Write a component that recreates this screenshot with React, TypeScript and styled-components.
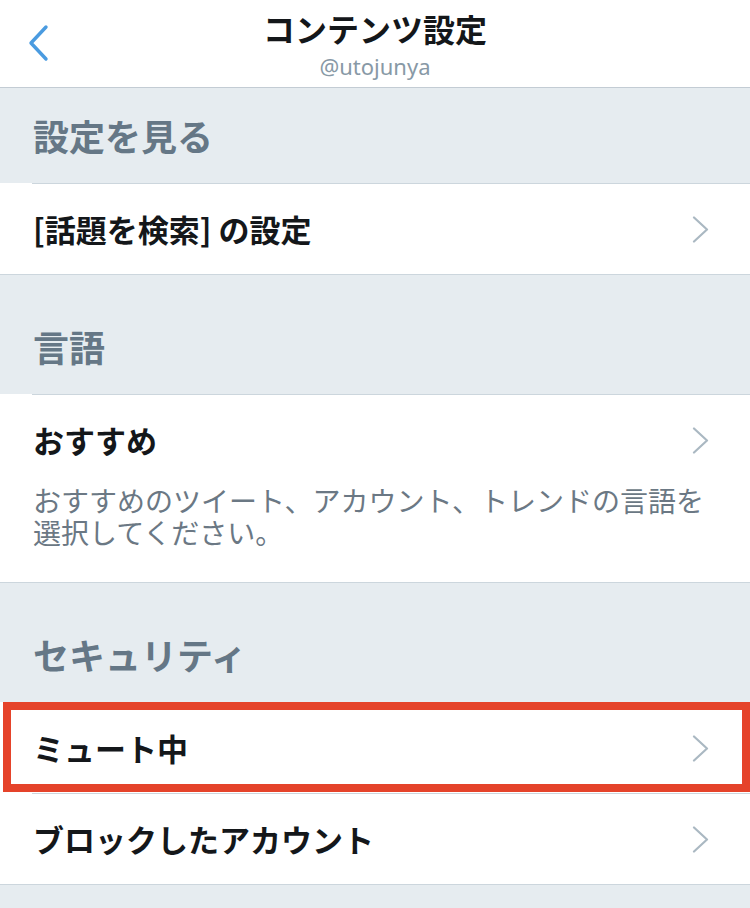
import styled, { createGlobalStyle } from 'styled-components';

const GlobalStyle = createGlobalStyle`
  html, body {
    margin: 0;
    padding: 0;
    background: #e6ecf0;
  }
  body {
    font-family: "Noto Sans CJK JP", "Noto Sans", sans-serif;
    -webkit-font-smoothing: antialiased;
  }
`;

const JP = `"Noto Sans CJK JP", "Noto Sans", sans-serif`;

interface Row {
  title: string;
  description?: string;
  highlight?: boolean;
}

interface Section {
  heading: string;
  rows: Row[];
}

const sections: Section[] = [
  { heading: '設定を見る', rows: [{ title: '[話題を検索] の設定' }] },
  {
    heading: '言語',
    rows: [
      {
        title: 'おすすめ',
        description: 'おすすめのツイート、アカウント、トレンドの言語を選択してください。',
      },
    ],
  },
  {
    heading: 'セキュリティ',
    rows: [{ title: 'ミュート中', highlight: true }, { title: 'ブロックしたアカウント' }],
  },
];

function BackIcon() {
  return (
    <svg width="22" height="38" viewBox="0 0 22 38">
      <path
        d="M19 3 L4 19 L19 35"
        fill="none"
        stroke="#4a9be0"
        strokeWidth="3.4"
        strokeLinecap="round"
        strokeLinejoin="round"
      />
    </svg>
  );
}

function Chevron() {
  return (
    <svg width="17" height="27" viewBox="0 0 17 27">
      <path
        d="M2 1.5 L15 13.5 L2 25.5"
        fill="none"
        stroke="#aab8c2"
        strokeWidth="2.2"
        strokeLinecap="round"
        strokeLinejoin="round"
      />
    </svg>
  );
}

export default function App() {
  return (
    <>
      <GlobalStyle />
      <Page>
        <NavBar>
          <BackButton aria-label="戻る">
            <BackIcon />
          </BackButton>
          <TitleBlock>
            <Title>コンテンツ設定</Title>
            <Handle>@utojunya</Handle>
          </TitleBlock>
          <span />
        </NavBar>

        {sections.map((section, sIdx) => (
          <div key={section.heading}>
            <SectionHeader $first={sIdx === 0}>{section.heading}</SectionHeader>
            <Group>
              {section.rows.map((row) => (
                <RowWrap key={row.title}>
                  <RowItem>
                    <RowText>
                      <RowTitle>{row.title}</RowTitle>
                      {row.description && <RowDescription>{row.description}</RowDescription>}
                    </RowText>
                    <ChevronSlot>
                      <Chevron />
                    </ChevronSlot>
                  </RowItem>
                  {row.highlight && <Highlight />}
                </RowWrap>
              ))}
            </Group>
          </div>
        ))}
        <Footer />
      </Page>
    </>
  );
}

// Styled Components
const Page = styled.div`
  width: 750px;
  min-height: 908px;
  background: #e6ecf0;
  overflow: hidden;
`;

const NavBar = styled.header`
  display: grid;
  grid-template-columns: 1fr auto 1fr;
  align-items: start;
  height: 87px;
  background: #ffffff;
  border-bottom: 1px solid #c3ccd4;
`;

const BackButton = styled.button`
  justify-self: start;
  margin: 24px 0 0 27px;
  padding: 0;
  border: none;
  background: none;
  display: flex;
  cursor: pointer;
`;

const TitleBlock = styled.div`
  display: flex;
  flex-direction: column;
  align-items: center;
  padding-top: 8px;
  gap: 4px;
`;

const Title = styled.h1`
  margin: 0;
  font-family: ${JP};
  font-size: 32px;
  line-height: 40px;
  font-weight: 700;
  color: #14171a;
`;

const Handle = styled.div`
  font-family: "Noto Sans", ${JP};
  font-size: 22px;
  line-height: 28px;
  color: #8899a6;
`;

const SectionHeader = styled.h2<{ $first?: boolean }>`
  margin: 0;
  padding: ${({ $first }) => ($first ? '25px' : '49px')} 33px 26px;
  font-family: ${JP};
  font-size: 36px;
  line-height: 44px;
  font-weight: 700;
  color: #657786;
  background: #e6ecf0;
`;

const Group = styled.div`
  background: #ffffff;
  border-bottom: 1px solid #ccd6dd;
`;

const RowWrap = styled.div`
  position: relative;
  background: #ffffff;

  &::before {
    content: '';
    display: block;
    height: 1px;
    margin-left: 32px;
    background: #ccd6dd;
  }
`;

const RowItem = styled.div`
  display: flex;
  align-items: flex-start;
  padding: 23px 42px 23px 33px;
`;

const RowText = styled.div`
  flex: 1;
  display: flex;
  flex-direction: column;
`;

const RowTitle = styled.div`
  font-family: ${JP};
  font-size: 31px;
  line-height: 44px;
  font-weight: 700;
  color: #14171a;
`;

const RowDescription = styled.p`
  margin: 22px 0 11px;
  width: 678px;
  font-family: ${JP};
  font-size: 28px;
  line-height: 32px;
  font-weight: 400;
  color: #6b7884;
`;

const ChevronSlot = styled.div`
  position: absolute;
  right: 41px;
  top: 33px;
  display: flex;
`;

const Highlight = styled.div`
  position: absolute;
  top: 0;
  left: 3px;
  right: 0;
  height: 90px;
  border: 8px solid #e5432a;
  box-sizing: border-box;
  pointer-events: none;
`;

const Footer = styled.div`
  height: 21px;
  background: #e6ecf0;
`;
